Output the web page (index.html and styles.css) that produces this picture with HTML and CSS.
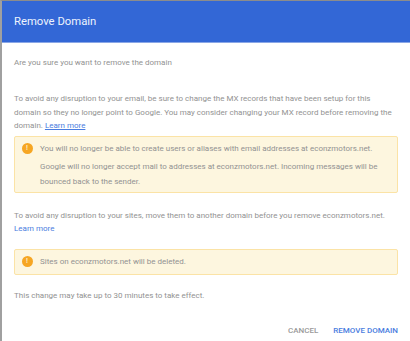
FILE: index.html
```html
<!DOCTYPE html>
<html>
<head>
    <meta charset="utf-8"/>
    <link rel="stylesheet" href="styles.css">
</head>
<body>
<div class="dialog">
    <div class="header">Remove Domain</div>
    <div class="content">
        <p class="intro">Are you sure you want to remove the domain</p>
        <p class="mx">To avoid any disruption to your email, be sure to change the MX records that have been setup for this
            domain so they no longer point to Google. You may consider changing your MX record before removing the
            domain. <a href="#">Learn more</a></p>
        <div class="warning">
            <span class="icon">!</span>
            <div class="lines">
                <p>You will no longer be able to create users or aliases with email addresses at econzmotors.net.</p>
                <p>Google will no longer accept mail to addresses at econzmotors.net. Incoming messages will be
                    bounced back to the sender.</p>
            </div>
        </div>
        <p class="sites">To avoid any disruption to your sites, move them to another domain before you remove econzmotors.net.
            <a href="#">Learn more</a></p>
        <div class="warning small">
            <span class="icon">!</span>
            <div class="lines">
                <p>Sites on econzmotors.net will be deleted.</p>
            </div>
        </div>
        <p class="note">This change may take up to 30 minutes to take effect.</p>
    </div>
    <div class="actions">
        <span class="btn cancel">CANCEL</span>
        <span class="btn primary">REMOVE DOMAIN</span>
    </div>
</div>
</body>
</html>
```

FILE: styles.css
```css
body {
    margin: 0;
    background: #fff;
    font-family: Roboto, 'Liberation Sans', Arial, sans-serif;
}

.dialog {
    height: 341px;
    border-top: 1px solid #8c8c8c;
    border-left: 2px solid #a0a0a0;
    box-sizing: border-box;
}

.header {
    height: 41px;
    background: #3367d6;
    border-bottom: 1px solid #8aa7e6;
    color: #eef3fd;
    font-size: 11.3px;
    line-height: 41px;
    padding-left: 12px;
}

.content {
    padding: 0 12px;
    font-size: 8px;
    line-height: 13.5px;
    color: #929292;
}

.content p {
    margin: 0;
}

.content .intro {
    margin: 13px 0 22.5px 0;
}

.content .mx, .content .sites, .content .note {
    padding-right: 4px;
}

.content a {
    color: #4a7de0;
    text-decoration: underline;
}

.content .sites a {
    text-decoration: none;
}

.warning {
    display: flex;
    margin: 3px 0 16.5px 0;
    padding: 4px 10px 3px 6.5px;
    line-height: 15px;
    background: #fdf6df;
    border: 1px solid #fbe3a6;
    border-radius: 2px;
}

.warning.small {
    margin: 13.5px 0 14.25px 0;
    padding: 4.5px 10px 4.5px 6.5px;
}

.warning .icon {
    flex: none;
    width: 11px;
    height: 11px;
    margin: 2px 7.5px 0 0;
    border-radius: 50%;
    background: #f6a623;
    color: #fde9c2;
    font-size: 7px;
    font-weight: bold;
    line-height: 11px;
    text-align: center;
}

.warning .lines p + p {
    margin-top: 3px;
}

.content .sites {
    line-height: 13px;
}

.actions {
    display: flex;
    justify-content: flex-end;
    gap: 15px;
    padding: 24px 12px 0 0;
    font-size: 8px;
    line-height: 10px;
    font-weight: 500;
}

.btn.cancel {
    color: #9a9a9a;
}

.btn.primary {
    color: #4a7de0;
}
```
